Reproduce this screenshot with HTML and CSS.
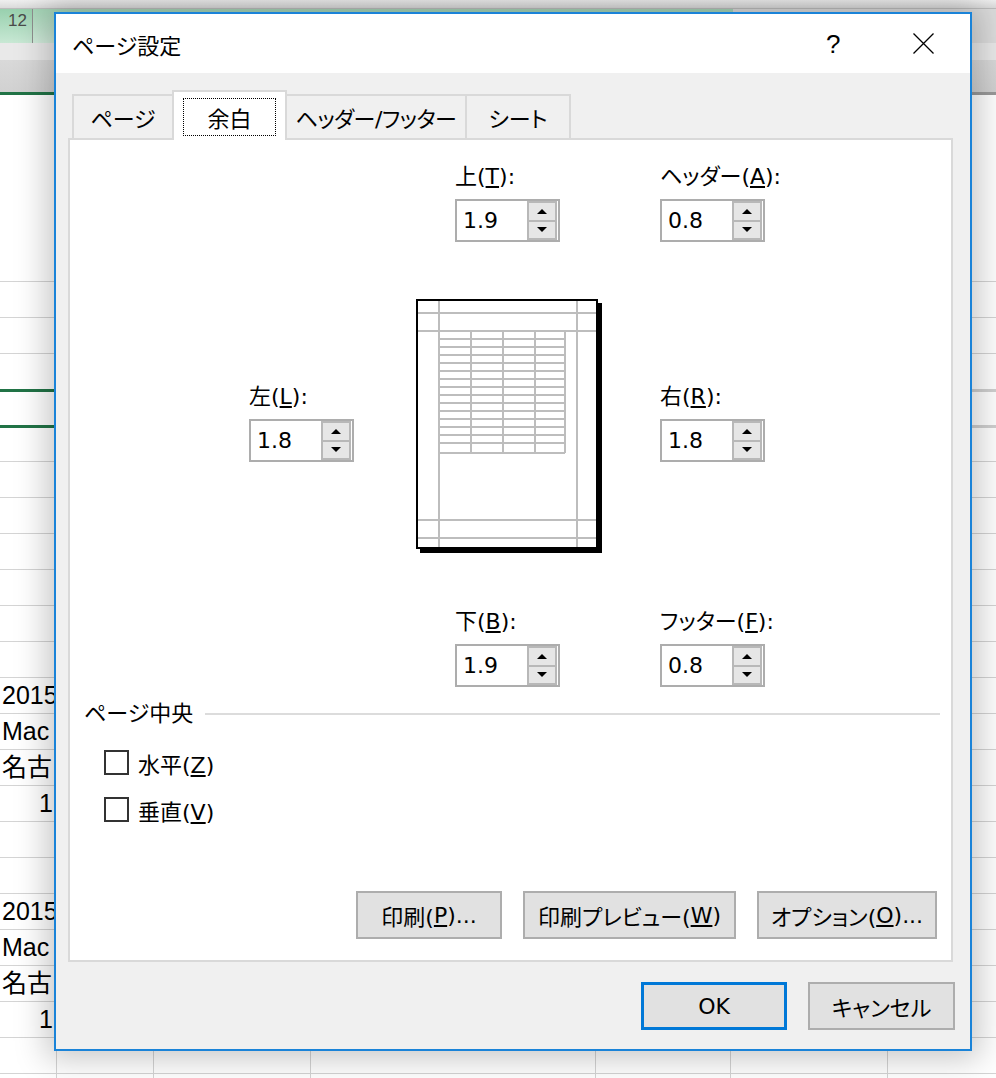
FILE: index.html
```html
<!DOCTYPE html>
<html lang="ja">
<head>
<meta charset="utf-8">
<title>ページ設定</title>
<link rel="stylesheet" href="styles.css">
</head>
<body>
<div class="screen">
  <div class="sheet">
    <div class="sh-top"></div>
    <div class="sh-head"><div class="hc-12">12</div><div class="hc-sel"></div><div class="hc-rest"></div></div>
    <div class="sh-band1"></div>
    <div class="sh-band2"></div>
    <div class="sh-green"></div>
    <div class="sh-blank"></div>
    <div class="rows">
      <div class="row"><div class="c1"></div></div>
      <div class="row"><div class="c1"></div></div>
      <div class="row"><div class="c1"></div></div>
      <div class="row sel"><div class="c1"></div></div>
      <div class="row sel"><div class="c1"></div></div>
      <div class="row"><div class="c1"></div></div>
      <div class="row"><div class="c1"></div></div>
      <div class="row"><div class="c1"></div></div>
      <div class="row"><div class="c1"></div></div>
      <div class="row"><div class="c1"></div></div>
      <div class="row"><div class="c1"></div></div>
      <div class="row"><div class="c1">2015</div></div>
      <div class="row"><div class="c1">Mac</div></div>
      <div class="row"><div class="c1">名古</div></div>
      <div class="row"><div class="c1 num">1</div></div>
      <div class="row"><div class="c1"></div></div>
      <div class="row"><div class="c1"></div></div>
      <div class="row"><div class="c1">2015</div></div>
      <div class="row"><div class="c1">Mac</div></div>
      <div class="row"><div class="c1">名古</div></div>
      <div class="row"><div class="c1 num">1</div></div>
      <div class="row"><div class="c1"></div></div>
      <div class="row"><div class="c1"></div></div>
    </div>
  </div>

  <div class="dialog">
    <div class="titlebar">
      <span class="title">ページ設定</span>
      <span class="help">?</span>
      <span class="close"><svg width="21" height="21" viewBox="0 0 21 21"><path d="M0.5 0.5L20.5 20.5M20.5 0.5L0.5 20.5" stroke="#000" stroke-width="1.3" fill="none"/></svg></span>
    </div>
    <div class="dbody">
      <div class="tabs">
        <div class="tab t-page">ページ</div>
        <div class="tab tab-sel t-margin"><span class="focus">余白</span></div>
        <div class="tab t-hf">ヘッダー/フッター</div>
        <div class="tab t-sheet">シート</div>
      </div>
      <div class="panel">
        <div class="mgrid">
          <div class="field g-top">
            <div class="flabel">上(<u>T</u>):</div>
            <div class="spin"><span class="val">1.9</span><span class="sbs"><span class="sb up"></span><span class="sb down"></span></span></div>
          </div>
          <div class="field g-header">
            <div class="flabel">ヘッダー(<u>A</u>):</div>
            <div class="spin"><span class="val">0.8</span><span class="sbs"><span class="sb up"></span><span class="sb down"></span></span></div>
          </div>
          <div class="field g-left">
            <div class="flabel">左(<u>L</u>):</div>
            <div class="spin"><span class="val">1.8</span><span class="sbs"><span class="sb up"></span><span class="sb down"></span></span></div>
          </div>
          <div class="g-prev">
            <svg width="186" height="254" viewBox="0 0 186 254">
              <rect x="4" y="4" width="182" height="250" fill="#000"/>
              <rect x="1" y="1" width="180" height="248" fill="#fff" stroke="#000" stroke-width="2"/>
              <g stroke="#bdbdbd" stroke-width="2" fill="none">
                <path d="M23 2V248M161 2V248M2 14H180M2 32H180M2 221H180M2 239H180"/>
                <path d="M55 32V154M87 32V154M119 32V154M149 32V154"/>
                <path d="M23 40H149M23 48H149M23 56H149M23 64H149M23 72H149M23 80H149M23 88H149M23 96H149M23 104H149M23 112H149M23 120H149M23 128H149M23 136H149M23 144H149M23 154H149"/>
              </g>
            </svg>
          </div>
          <div class="field g-right">
            <div class="flabel">右(<u>R</u>):</div>
            <div class="spin"><span class="val">1.8</span><span class="sbs"><span class="sb up"></span><span class="sb down"></span></span></div>
          </div>
          <div class="field g-bottom">
            <div class="flabel">下(<u>B</u>):</div>
            <div class="spin"><span class="val">1.9</span><span class="sbs"><span class="sb up"></span><span class="sb down"></span></span></div>
          </div>
          <div class="field g-footer">
            <div class="flabel">フッター(<u>F</u>):</div>
            <div class="spin"><span class="val">0.8</span><span class="sbs"><span class="sb up"></span><span class="sb down"></span></span></div>
          </div>
        </div>

        <div class="grp">
          <div class="grp-head"><span>ページ中央</span><span class="grp-line"></span></div>
          <div class="chk"><span class="box"></span><span>水平(<u>Z</u>)</span></div>
          <div class="chk"><span class="box"></span><span>垂直(<u>V</u>)</span></div>
        </div>

        <div class="pbtns">
          <button class="btn b-print">印刷(<u>P</u>)...</button>
          <button class="btn b-preview">印刷プレビュー(<u>W</u>)</button>
          <button class="btn b-option">オプション(<u>O</u>)...</button>
        </div>
      </div>
      <div class="footer">
        <button class="btn ok">OK</button>
        <button class="btn cancel">キャンセル</button>
      </div>
    </div>
  </div>
</div>
</body>
</html>
```

FILE: styles.css
```css
html, body {
  margin: 0;
  padding: 0;
}
body {
  width: 996px;
  height: 1078px;
  overflow: hidden;
  background: #fff;
  font-family: "DejaVu Sans", "Noto Sans CJK JP", sans-serif;
  font-feature-settings: "palt";
  color: #000;
}
.screen {
  position: relative;
  width: 996px;
  height: 1078px;
  overflow: hidden;
}

/* ---------- background spreadsheet ---------- */
.sheet {
  width: 996px;
  height: 1078px;
  background: #fff;
}
.sh-top {
  height: 8px;
  background: linear-gradient(#efefef, #dadada);
  border-bottom: 1px solid #bcbcbc;
}
.sh-head {
  height: 34px;
  display: flex;
}
.hc-12 {
  width: 33px;
  box-sizing: border-box;
  border-right: 1px solid #8f8f8f;
  background: linear-gradient(#98d0ae, #c8e8d4);
  font: 17px/24px "Liberation Sans", sans-serif;
  color: #4a4a4a;
  padding-left: 8px;
}
.hc-sel {
  width: 700px;
  background: linear-gradient(#a6d6b8, #d2ecdc);
}
.hc-rest {
  flex: 1;
  background: #dcdcdc;
}
.sh-band1 {
  height: 17px;
  background: #e9e9e9;
}
.sh-band2 {
  height: 32px;
  background: linear-gradient(#d9d9d9, #d1d1d1);
}
.sh-green {
  height: 3px;
  background: linear-gradient(90deg, #217346 0 700px, #9a9a9a 700px);
}
.sh-blank {
  height: 186px;
}
.rows {
  background-image: linear-gradient(90deg,
    transparent 0 56px, #d4d4d4 56px 57px,
    transparent 57px 153px, #d4d4d4 153px 154px,
    transparent 154px 310px, #d4d4d4 310px 311px,
    transparent 311px 595px, #d4d4d4 595px 596px,
    transparent 596px 730px, #d4d4d4 730px 731px,
    transparent 731px 887px, #d4d4d4 887px 888px,
    transparent 888px);
}
.row {
  height: 36px;
  box-sizing: border-box;
  border-top: 1px solid #d4d4d4;
  display: flex;
}
.row.sel {
  border-top: 3px solid #217346;
  border-image: linear-gradient(90deg, #217346 0 700px, #d0d0d0 700px) 1;
}
.c1 {
  width: 56px;
  box-sizing: border-box;
  font: 25px/34px "Liberation Sans", "Noto Sans CJK JP", sans-serif;
  padding-left: 2px;
  white-space: nowrap;
}
.c1.num {
  text-align: right;
  padding-right: 3px;
}

/* ---------- dialog ---------- */
.dialog {
  position: absolute;
  left: 54px;
  top: 12px;
  width: 918px;
  height: 1039px;
  box-sizing: border-box;
  border: 2px solid #1a83d8;
  background: #f0f0f0;
  box-shadow: 0 0 30px 8px rgba(0, 0, 0, 0.22);
  display: flex;
  flex-direction: column;
}
.titlebar {
  flex: none;
  height: 59px;
  background: #fff;
  display: flex;
  align-items: center;
  padding: 0 36px 0 16px;
}
.title {
  flex: 1;
  font-size: 22px;
}
.help {
  width: 14px;
  text-align: center;
  font: 26px/1 "Liberation Sans", sans-serif;
}
.close {
  margin-left: 73px;
  width: 21px;
  height: 21px;
  display: flex;
}
.dbody {
  flex: 1;
  padding: 17px 17px 0 12px;
  display: flex;
  flex-direction: column;
}

/* tabs */
.tabs {
  height: 48px;
  display: flex;
  align-items: flex-end;
  padding-left: 4px;
}
.tab {
  height: 44px;
  box-sizing: border-box;
  border: 2px solid #d9d9d9;
  border-bottom: 0;
  background: #f0f0f0;
  display: flex;
  align-items: center;
  justify-content: center;
  font-size: 22px;
  white-space: nowrap;
}
.t-page {
  width: 100px;
  border-right: 0;
}
.t-margin {
  width: 115px;
}
.t-hf {
  width: 180px;
  border-left: 0;
  letter-spacing: -0.5px;
}
.t-sheet {
  width: 104px;
  border-left: 0;
}
.tab-sel {
  position: relative;
  z-index: 1;
  height: 50px;
  margin-bottom: -2px;
  background: #fff;
  padding: 6px 9px 4px;
  align-items: stretch;
}
.focus {
  flex: 1;
  border: 1px dotted #000;
  display: flex;
  align-items: center;
  justify-content: center;
}

/* panel */
.panel {
  flex: none;
  height: 824px;
  box-sizing: border-box;
  border: 2px solid #d9d9d9;
  background: #fff;
  display: flex;
  flex-direction: column;
}
.mgrid {
  display: grid;
  grid-template-columns: 167px 39px 205px 1fr;
  grid-template-rows: 77px 254px 77px;
  row-gap: 57px;
  margin: 25px 0 0 179px;
}
.g-top { grid-column: 3; grid-row: 1; }
.g-header { grid-column: 4; grid-row: 1; }
.g-left { grid-column: 1; grid-row: 2; margin-top: 86px; }
.g-prev { grid-column: 2 / span 2; grid-row: 2; }
.g-prev svg { display: block; }
.g-right { grid-column: 4; grid-row: 2; margin-top: 86px; }
.g-bottom { grid-column: 3; grid-row: 3; }
.g-footer { grid-column: 4; grid-row: 3; }

.field {
  display: flex;
  flex-direction: column;
  align-self: start;
}
.flabel {
  font-size: 22px;
  line-height: 24px;
  height: 24px;
  margin-bottom: 10px;
  white-space: nowrap;
}
u {
  text-underline-offset: 2px;
}
.spin {
  display: flex;
  width: 105px;
  height: 43px;
  box-sizing: border-box;
  border: 2px solid #adadad;
  background: #fff;
}
.val {
  flex: 1;
  padding-left: 6px;
  font-size: 22px;
  line-height: 39px;
}
.sbs {
  width: 30px;
  margin-right: 1px;
  display: flex;
  flex-direction: column;
}
.sb {
  flex: 1;
  box-sizing: border-box;
  border: 2px solid #b8b8b8;
  background: #e6e6e6;
  display: flex;
  align-items: center;
  justify-content: center;
}
.sb.down {
  border-top: 0;
}
.sb.up::before {
  content: "";
  border-left: 5px solid transparent;
  border-right: 5px solid transparent;
  border-bottom: 5px solid #000;
}
.sb.down::before {
  content: "";
  border-left: 5px solid transparent;
  border-right: 5px solid transparent;
  border-top: 5px solid #000;
}

/* page center group */
.grp {
  margin-top: 15px;
}
.grp-head {
  display: flex;
  align-items: center;
  height: 24px;
  padding-left: 14px;
  font-size: 22px;
  line-height: 24px;
}
.grp-line {
  flex: 1;
  height: 2px;
  background: #dcdcdc;
  margin: 0 11px 0 12px;
}
.chk {
  display: flex;
  align-items: center;
  height: 25px;
  margin-top: 24px;
  padding-left: 34px;
  font-size: 22px;
}
.chk + .chk {
  margin-top: 22px;
}
.box {
  width: 25px;
  height: 25px;
  box-sizing: border-box;
  border: 2px solid #333;
  background: #fff;
  margin-right: 9px;
}

/* buttons */
.btn {
  height: 48px;
  box-sizing: border-box;
  border: 2px solid #adadad;
  background: #e1e1e1;
  padding: 0;
  font-family: "DejaVu Sans", "Noto Sans CJK JP", sans-serif;
  font-feature-settings: "palt";
  font-size: 22px;
  color: #000;
  display: flex;
  align-items: center;
  justify-content: center;
  white-space: nowrap;
}
.pbtns {
  margin-top: auto;
  display: flex;
  justify-content: flex-end;
  gap: 21px;
  padding: 0 14px 21px 0;
}
.b-print { width: 146px; }
.b-preview { width: 213px; }
.b-option { width: 180px; }
.footer {
  display: flex;
  justify-content: flex-end;
  gap: 21px;
  padding-top: 20px;
  margin-right: -2px;
}
.ok {
  width: 146px;
  border: 3px solid #0078d7;
}
.cancel {
  width: 147px;
}
```
